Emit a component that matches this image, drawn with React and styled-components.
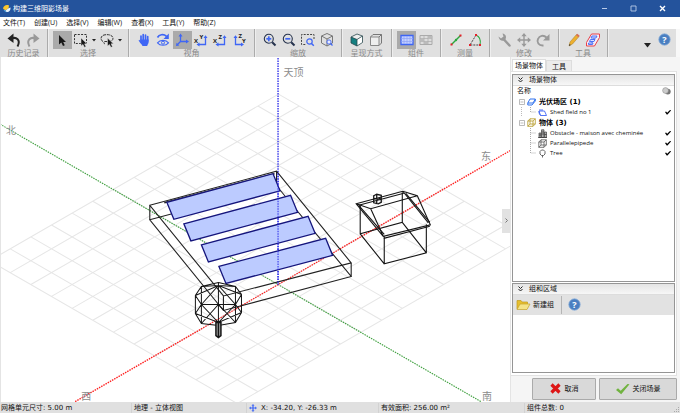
import React from "react";
import styled, { createGlobalStyle, css } from "styled-components";

const GlobalStyle = createGlobalStyle`
  * { box-sizing: border-box; }
  html, body { margin: 0; background: #f2f2f2; }
  body, button, input, table {
    font-family: "Open Sans", "Noto Sans CJK SC", sans-serif;
    font-size: 7px;
    line-height: 10px;
    color: #111;
  }
  button { padding: 0; border: 0; background: none; white-space: nowrap; }
  svg { display: block; flex: none; }
`;

const BLUE = "#3f66f5";

/* ---------- window frame ---------- */

const Window = styled.div`
  display: flex;
  flex-direction: column;
  min-height: 100vh;
  overflow: hidden;
  background: #f8f8f8;
`;

const TitleBar = styled.header`
  display: flex;
  align-items: center;
  height: 17px;
  padding: 0 4px 0 3px;
  gap: 2px;
  background: #24539c;
  color: #fff;
`;

const WindowTitle = styled.h1`
  flex: 1;
  margin: 0;
  font-size: 7px;
  font-weight: 400;
`;

const WindowControl = styled.button`
  display: flex;
  align-items: center;
  justify-content: center;
  width: 27px;
  height: 16px;
`;

const MenuBar = styled.nav`
  display: flex;
  align-items: center;
  gap: 9px;
  height: 12px;
  padding-left: 3px;
  background: #fff;
`;

const MenuItem = styled.button`
  font-size: 7px;
`;

/* ---------- toolbar ---------- */

const Toolbar = styled.div`
  display: flex;
  height: 28px;
  margin: 0 4px 0 0;
  background: #e0e0e0;
`;

const Group = styled.section`
  display: flex;
  flex-direction: column;
  align-items: center;
  width: ${(p) => p.$width}px;
  padding-top: 2px;
  border-right: 1px solid #ababab;
  box-shadow: 1px 0 0 #eee;
`;

const GroupLabel = styled.span`
  font-size: 8px;
  line-height: 7px;
  color: #8a8a8a;
`;

const Tools = styled.div`
  display: flex;
  align-items: center;
`;

const Tool = styled.button`
  display: flex;
  align-items: center;
  justify-content: center;
  width: 19px;
  height: 18px;
  background: ${(p) => (p.$active ? "#aaa" : "transparent")};
`;

const Drop = styled.button`
  display: flex;
  align-items: center;
  justify-content: center;
  width: 7px;
  height: 18px;
`;

const ToolbarEnd = styled.div`
  display: flex;
  flex: 1;
  align-items: center;
  justify-content: flex-end;
  gap: 4px;
  padding: 0 2px 8px 0;
`;

const MoreButton = styled(Drop)`
  align-items: flex-end;
`;

/* ---------- body ---------- */

const Body = styled.main`
  display: flex;
  flex: 1;
  min-height: 344px;
`;

const Viewport = styled.section`
  position: relative;
  display: flex;
  flex: 1;
  min-width: 0;
  background: #fff;
  border-left: 1px solid #e4e4e4;
  border-right: 1px solid #e4e4e4;
`;

const SceneSvg = styled.svg`
  flex: 1;
  width: 100%;
  height: auto;
  min-width: 0;
`;

const CollapseHandle = styled.button`
  position: absolute;
  right: 0;
  top: 44%;
  display: flex;
  align-items: center;
  justify-content: center;
  width: 8px;
  height: 24px;
  background: #e2e2e2;
`;

const Side = styled.aside`
  display: flex;
  flex-direction: column;
  width: 169px;
  padding: 2px 3px 2px 0;
  background: #f5f5f5;
`;

const Tabs = styled.div`
  display: flex;
  align-items: flex-end;
  padding-left: 1px;
`;

const Tab = styled.button`
  height: ${(p) => (p.$active ? 12 : 11)}px;
  padding: 0 ${(p) => (p.$active ? 2 : 5)}px;
  border: 1px solid #ddd;
  border-bottom: 0;
  line-height: 9px;
  background: ${(p) => (p.$active ? "#fff" : "#ececec")};
`;

const TabPage = styled.div`
  display: flex;
  flex: 1;
  flex-direction: column;
  gap: 1px;
  padding: 2px 1px;
  background: #fff;
  border: 1px solid #e2e2e2;
  border-left: 0;
`;

const Panel = styled.section`
  display: flex;
  flex-direction: column;
  flex: ${(p) => p.$grow};
  border: 1px solid #959595;
  background: #fff;
`;

const PanelHeader = styled.button`
  display: flex;
  align-items: center;
  gap: 6px;
  height: 11px;
  padding-left: 5px;
  background: linear-gradient(#e4e4e4, #f7f7f7);
  border-bottom: 1px solid #ddd;
`;

const ObjectTable = styled.table`
  width: 100%;
  border-collapse: collapse;
  th, td { padding: 0; }
  thead th { height: 10px; font-weight: 400; text-align: left; }
`;

const NameHeader = styled.th`
  && { padding-left: 4px; }
`;

const Row = styled.tr`
  td { height: ${(p) => (p.$parent ? 11 : 10)}px; }
`;

const NodeCell = styled.div`
  display: flex;
  align-items: center;
  height: ${(p) => (p.$parent ? 11 : 10)}px;
  padding-left: 5px;
  font-size: 6px;
  white-space: nowrap;
  ${(p) => p.$parent && css`
    font-family: "DejaVu Sans", "Noto Sans CJK SC", sans-serif;
    font-size: 7px;
    font-weight: 700;
    color: #000;
  `}
`;

const NodeLabel = styled.label`
  margin-left: 3px;
`;

const Toggle = styled.button`
  display: flex;
  align-items: center;
  width: 9px;
  height: 11px;
`;

const Narrow = styled.td`
  width: 12px;
`;

const Shown = styled.input`
  display: block;
  appearance: none;
  width: 6px;
  height: 5px;
  margin: 0 0 0 3px;
  background: #000;
  clip-path: ${(p) => (p.checked ? "polygon(0 50%, 18% 42%, 36% 66%, 88% 5%, 100% 18%, 42% 100%, 28% 100%)" : "none")};
`;

const GroupTools = styled.div`
  display: flex;
  align-items: center;
  height: 20px;
  padding-left: 3px;
  background: #e2e2e2;
`;

const NewGroup = styled.button`
  display: flex;
  align-items: center;
  gap: 2px;
  height: 18px;
  padding-right: 7px;
  margin-right: 6px;
  border-right: 1px solid #b5b5b5;
`;

const Actions = styled.div`
  display: flex;
  justify-content: flex-end;
  gap: 3px;
  padding-top: 2px;
`;

const ActionButton = styled.button`
  display: flex;
  align-items: center;
  justify-content: center;
  gap: ${(p) => (p.$wide ? 3 : 4)}px;
  width: ${(p) => (p.$wide ? 78 : 64)}px;
  height: 22px;
  background: #d9d9d9;
  border: 1px solid #aaa;
  border-radius: 1px;
`;

/* ---------- status bar ---------- */

const StatusBar = styled.footer`
  display: grid;
  grid-template-columns: 131fr 115fr 132fr 146fr 156fr;
  align-items: center;
  height: 12px;
  background: #e0e0e0;
  font-family: "DejaVu Sans", "Noto Sans CJK SC", sans-serif;
  white-space: nowrap;
`;

const StatusItem = styled.span`
  display: flex;
  align-items: center;
  gap: 4px;
  height: 10px;
  padding-left: ${(p) => (p.$first ? 1 : 2)}px;
  border-left: ${(p) => (p.$first ? "0" : "1px solid #d2d2d2")};
`;

const Grip = styled.span`
  margin-left: auto;
  align-self: flex-end;
`;

/* ---------- icons ---------- */

const Icon = ({ w = 16, h = 16, children }) => (
  <svg width={w} height={h} viewBox={`0 0 ${w} ${h}`} fill="none" aria-hidden="true">{children}</svg>
);

const LogoIcon = () => (
  <Icon w={8} h={10}>
    <path d="M0 4.500C.5 1.500 3.500.2 6 1.500L5.600 4.200 2.500 6.500Z" fill="#fbc52d" />
    <path d="M2.500 6.500 5.600 4.200 7.500 3.500C7.800 6 6 8.500 3.300 8Z" fill="#eaf3fb" />
    <path d="M.6 5.500 2.500 6.500 3.500 8.200C2 8 .8 7 .6 5.500Z" fill="#4ba0e0" />
  </Icon>
);

const UndoIcon = ({ color, flip }) => (
  <Icon>
    <g transform={flip ? "translate(16 0) scale(-1 1)" : undefined}>
      <path d="M5 6.500C10.500 4.500 15 8 11.500 14.500" stroke={color} strokeWidth="2" />
      <path d="M1.500 6.500 7.500 1.500V11Z" fill={color} />
    </g>
  </Icon>
);

const arrowPath = "M0 0V9.500L2.300 7.500 4 11 5.800 10.200 4.200 6.900H7Z";

const CursorIcon = () => (
  <Icon><path transform="translate(5 3)" d={arrowPath} fill="#181818" /></Icon>
);

const MarqueeIcon = () => (
  <Icon>
    <path d="M1.500 2.500H13.500V11.500H1.500Z" stroke="#333" strokeDasharray="2 1.300" />
    <path transform="translate(8 6) scale(.85)" d={arrowPath} fill="#181818" stroke="#e0e0e0" strokeWidth=".6" />
  </Icon>
);

const LassoIcon = () => (
  <Icon>
    <path d="M4 9.500C1 8 1.500 4 5 3 9 2 13.500 3 14 6 14.200 9 11 10 7 9.500 4.500 9.200 4 11 6 12" stroke="#333" strokeDasharray="3 .8" />
    <path transform="translate(8.500 6) scale(.85)" d={arrowPath} fill="#181818" stroke="#e0e0e0" strokeWidth=".6" />
  </Icon>
);

const CaretIcon = ({ w = 4 }) => (
  <Icon w={w} h={w === 4 ? 3 : 5}><path d={w === 4 ? "M0 0H4L2 2.500Z" : "M0 0H7L3.500 4.500Z"} fill="#222" /></Icon>
);

const HandIcon = () => (
  <Icon>
    <path d="M5 10V4M7.200 8.500V2.500M9.500 8.500V3M11.700 9V4.500" stroke={BLUE} strokeWidth="1.700" strokeLinecap="round" />
    <path d="M4.200 7.500 12.600 7.500V10.500C12.300 12 11.500 12.500 11.200 14H6.500C6 12.500 4 11 2.600 8.500L3.200 7.800 4.800 9.200Z" fill={BLUE} />
  </Icon>
);

const OrbitIcon = () => (
  <Icon>
    <path d="M2.500 5.500C4 2.500 8.500 1.500 11.500 4.300" stroke={BLUE} strokeWidth="1.700" />
    <path d="M13.800 1.500V7H8.500Z" fill={BLUE} />
    <path d="M2.500 10.800C5 7.500 11 7.500 13.500 10.800 11 14 5 14 2.500 10.800Z" stroke={BLUE} strokeWidth="1.100" />
    <circle cx="8" cy="10.700" r="1.500" stroke={BLUE} />
  </Icon>
);

const AxesIcon = () => (
  <Icon>
    <path d="M6.500 3.500V9.500H13M6.500 9.500 3.500 12.500" stroke={BLUE} strokeWidth="1.300" />
    <path d="M4.500 4.500 6.500 1.500 8.500 4.500ZM12 7.500 15 9.500 12 11.500ZM2 14 2.500 10.700 5.300 13.500Z" fill={BLUE} />
  </Icon>
);

const Letter = styled.text`
  font: 700 6px "Open Sans", sans-serif;
  fill: #222;
`;

const PlaneIcon = ({ a, b, swap }) => (
  <Icon>
    {swap ? (
      <>
        <path d="M4.500 4.500V12.500H11" stroke={BLUE} strokeWidth="1.300" />
        <path d="M2.500 6 4.500 3.200 6.500 6ZM10 10.500 13 12.500 10 14.500Z" fill={BLUE} />
        <Letter x="7.500" y="6">{a}</Letter>
        <Letter x="11" y="10.500">{b}</Letter>
      </>
    ) : (
      <>
        <path d="M12.500 5V12.500H5.500" stroke={BLUE} strokeWidth="1.300" />
        <path d="M10.500 6 12.500 3.200 14.500 6ZM6.500 10.500 3.500 12.500 6.500 14.500Z" fill={BLUE} />
        <Letter x="1" y="10.500">{a}</Letter>
        <Letter x="6.500" y="6.500">{b}</Letter>
      </>
    )}
  </Icon>
);

const ZoomIcon = ({ plus }) => (
  <Icon>
    <circle cx="6.800" cy="6.800" r="4.500" stroke="#26334d" strokeWidth="1.100" />
    <path d="M4.300 6.800H9.300" stroke={BLUE} strokeWidth="1.700" />
    {plus && <path d="M6.800 4.300V9.300" stroke={BLUE} strokeWidth="1.700" />}
    <path d="M10.200 10.200 13.500 13.500" stroke="#26334d" strokeWidth="2" />
  </Icon>
);

const ZoomAreaIcon = () => (
  <Icon>
    <path d="M14 7V2.500H1.500V12.500H6" stroke="#444" strokeDasharray="2 1.200" />
    <circle cx="9.500" cy="9.500" r="2.700" fill="#e0e0e0" stroke={BLUE} strokeWidth="1.200" />
    <path d="M11.500 11.500 13.800 13.800" stroke={BLUE} strokeWidth="1.500" />
  </Icon>
);

const ZoomCubeIcon = () => (
  <Icon>
    <path d="M8 1.500 13.500 4V11L8 14 2.500 11V4ZM2.500 4 8 7 13.500 4M8 7V14" stroke="#777" />
    <circle cx="10" cy="10" r="2.100" fill="#e8eaff" stroke={BLUE} strokeWidth=".9" />
    <path d="M11.500 11.500 13.500 13.500" stroke={BLUE} strokeWidth="1.200" />
  </Icon>
);

const ShadedCubeIcon = () => (
  <Icon>
    <path d="M2 5 8 2 13.500 4 8 7.500Z" fill="#eee" />
    <path d="M2 5 8 7.500V14L2 11Z" fill="#157f80" />
    <path d="M8 7.500 13.500 4V10.500L8 14Z" fill="#fff" />
    <path d="M8 2 2 5V11L8 14 13.500 10.500V4ZM2 5 8 7.500 13.500 4M8 7.500V14" stroke="#28484c" strokeWidth=".8" />
  </Icon>
);

const WireCubeIcon = () => (
  <Icon>
    <path d="M2.500 5H11V13.500H2.500Z" fill="#eee" stroke="#888" />
    <path d="M2.500 5 5 2.500H13.500V11L11 13.500M11 5 13.500 2.500" stroke="#777" />
  </Icon>
);

const GridIcon = ({ active }) => (
  <Icon>
    <path d="M2 3.500H14V12.500H2Z" fill={active ? "#c5d0ff" : "#ddd"} stroke={active ? BLUE : "#aaa"} strokeWidth={active ? 1.3 : 1} />
    <path d={active ? "M5 4V12M8 4V12M11 4V12M2 6.500H14M2 9.500H14" : "M6 4V12M10 4V12M2 6.500H14M2 9.500H14"} stroke={active ? "#8da3f8" : "#aaa"} strokeWidth=".7" />
    {!active && <path d="M10 4H14V6.500H10ZM2 7H6V9.500H2ZM6 10H10V12H6Z" fill="#bbb" />}
  </Icon>
);

const MeasureIcon = () => (
  <Icon>
    <path d="M3.500 12.500 12.500 3.500" stroke="#2ba83e" strokeWidth="1.400" />
    <path d="M2.500 11.500h2v2h-2zM11.500 2.500h2v2h-2z" fill="#e5202a" />
    <circle cx="8" cy="8" r="1.200" fill="#2ba83e" />
  </Icon>
);

const AngleIcon = () => (
  <Icon>
    <path d="M9 3 3 13H13" stroke="#444" strokeDasharray="2 1" />
    <path d="M9 3C12.500 4.500 14 8.500 13 13" stroke="#2ba83e" strokeWidth="1.200" />
    <path d="M8 2h2v2H8zM2 12h2v2H2zM12 12h2v2h-2z" fill="#e5202a" />
  </Icon>
);

const WrenchIcon = () => (
  <Icon>
    <path d="M6.500 7 12.500 13.500" stroke="#999" strokeWidth="2.500" strokeLinecap="round" />
    <path d="M5.500 1.500C9 2 10 5.500 8 8 5.500 9.500 2 8.500 1.500 4.500L4 6.500 6.500 4.500Z" fill="#999" />
  </Icon>
);

const MoveIcon = ({ color = "#999", small }) => (
  <svg width={small ? 8 : 14} height={small ? 8 : 14} viewBox="1.500 1.500 13 13" fill="none" aria-hidden="true">
    <path d="M8 4V12M4 8H12" stroke={color} strokeWidth={small ? 2 : 1.300} />
    <path d="M5.500 4.500 8 1.500 10.500 4.500ZM5.500 11.500 8 14.500 10.500 11.500ZM4.500 5.500 1.500 8 4.500 10.500ZM11.500 5.500 14.500 8 11.500 10.500Z" fill={color} />
  </svg>
);

const RotateIcon = () => (
  <Icon>
    <path d="M8.500 13.500C3.500 14 1.500 10 3 7 4.500 3.500 8.500 2.500 11.500 5.500" stroke="#999" strokeWidth="1.900" />
    <path d="M14.500 2V8.500H8Z" fill="#999" />
  </Icon>
);

const PencilIcon = () => (
  <Icon>
    <path d="M3 14 4 10 10.500 2.500 13 4.500 6.500 12Z" fill="#edb02f" stroke="#a27a28" strokeWidth=".5" />
    <path d="M10 3.200 11.300 1.800 13.700 3.800 12.500 5.200Z" fill="#d77059" />
    <path d="M3 14 3.500 12 4.800 13Z" fill="#333" />
  </Icon>
);

const FieldIcon = () => (
  <Icon>
    <path d="M1.500 10.500 6.500 2H14.500V5.500L9.500 14H1.500Z" fill="#f3eef6" stroke="#e8404a" />
    <path d="M7 4H12L11 6H6ZM5.500 7.500H10L9 9.500H4.500ZM3.500 11H8L7.500 12.500H3.500ZM9 6V7.500M7 9.500V11" stroke={BLUE} strokeWidth=".9" fill="#dbe1ff" />
  </Icon>
);

const Question = styled.text`
  font: 700 9px "Open Sans", sans-serif;
  fill: #fff;
`;

const HelpIcon = () => (
  <Icon w={13} h={13}>
    <circle cx="6.500" cy="6.500" r="5.700" fill="#4a7fc1" stroke="#8aaed9" strokeWidth=".8" />
    <Question x="6.500" y="9.800" textAnchor="middle">?</Question>
  </Icon>
);

const ChevronsIcon = () => (
  <Icon w={5} h={6}><path d="M.5.5 2.500 2.500 4.500.5M.5 3 2.500 5 4.500 3" stroke="#222" /></Icon>
);

const SphereIcon = () => (
  <Icon w={9} h={8}>
    <circle cx="5.800" cy="4.600" r="2.900" fill="#777" />
    <circle cx="3.500" cy="3.500" r="2.900" fill="#ccc" stroke="#888" strokeWidth=".5" />
  </Icon>
);

const MinusBox = () => (
  <Icon w={7} h={11}><path d="M1.500 3.500H6.500V8.500H1.500ZM2.500 6H5.500" stroke="#aaa" strokeWidth=".8" /></Icon>
);

const Guide = ({ last, outer }) => (
  <Icon w={20} h={10}>
    {outer && <path d="M3.500 0V10" stroke="#bbb" strokeDasharray="1 1" />}
    <path d={last ? "M12.500 0V5H18" : "M12.500 0V10M12.500 5H18"} stroke="#aaa" strokeDasharray="1 1" />
  </Icon>
);

const SmallField = ({ flat }) => (
  <Icon w={9} h={9}>
    {flat
      ? <path d="M1 3H6.500L8.500 7.500H2.500ZM1 3V5L2.500 7.500M1 2H5" stroke={BLUE} strokeWidth=".9" />
      : <path d="M.8 6 3 2H8.300L6 6ZM.8 6V8H5L8.300 4V2" stroke="#3272ed" strokeWidth="1" />}
  </Icon>
);

const SmallCube = ({ color = "#b59a27" }) => (
  <Icon w={9} h={9}>
    <path d="M.8 3H6V8.300H.8ZM.8 3 3 .8H8.300V6L6 8.300M6 3 8.300.8M3 .8V6M3 6H8.300M.8 8.300 3 6" stroke={color} strokeWidth=".8" />
  </Icon>
);

const BuildingIcon = () => (
  <Icon w={9} h={9}>
    <path d="M1 4H3V8.500H1ZM3.500.8H6V8.500H3.500ZM6.500 3H8.500V8.500H6.500Z" fill="#aaa" stroke="#444" strokeWidth=".7" />
    <path d="M0 8.500H9M3.500 3H6M3.500 5H6M1 6H3M6.500 5.500H8.500" stroke="#333" strokeWidth=".7" />
  </Icon>
);

const TreeIcon = () => (
  <Icon w={9} h={9}>
    <path d="M3.500 1H5.500L7 2.500V5L5.500 6.500H3.500L2 5V2.500ZM4.500 6.500V8.500" stroke="#555" strokeWidth=".9" />
  </Icon>
);

const FolderIcon = () => (
  <Icon w={15} h={13}>
    <path d="M1 11V2.500H5L6 4H11.500V6" fill="#e6bf2e" stroke="#bf9a1c" strokeWidth=".7" />
    <path d="M1 11.500 4 6H14L11 11.500Z" fill="#f4e388" stroke="#c5a228" strokeWidth=".7" />
  </Icon>
);

const CrossIcon = () => (
  <Icon w={11} h={11}><path d="M1.500 1.500 9.500 9.500M9.500 1.500 1.500 9.500" stroke="#dd1616" strokeWidth="3.200" /></Icon>
);

const TickIcon = () => (
  <Icon w={14} h={12}><path d="M0 7 2 5.300 4.700 7.800 11.500 1 13.500 1.300 5.200 11.300Z" fill="#71b340" /></Icon>
);

/* ---------- 3D scene ---------- */

const AxisName = styled.text`
  font: 400 10px "Noto Sans CJK SC", sans-serif;
  fill: #8c8c8c;
`;

const CELL_X = 20.6;
const CELL_Y = 11.88;
const APEX = { x: 278, y: 94 };

const gridPoint = (right, left) =>
  `${APEX.x + (right - left) * CELL_X} ${APEX.y + (right + left) * CELL_Y}`;

const gridPath = [
  ...Array.from({ length: 13 }, (_, i) => `M${gridPoint(i, 0)}L${gridPoint(i, 14)}`),
  ...Array.from({ length: 15 }, (_, i) => `M${gridPoint(0, i)}L${gridPoint(12, i)}`),
].join("");

const panels = [
  "166.500,202 272.500,173.500 279.500,190.500 173.500,219",
  "183.500,223.500 290,195 297,212 190.500,240.500",
  "201,244.500 307.500,216 314.500,233 208,261.500",
  "218.500,266 325,238 332,255 225.500,283",
];

const Scene = () => (
  <SceneSvg viewBox="1 57 508 344" preserveAspectRatio="xMidYMid slice" fill="none" role="img" aria-label="3D">
    <path d={gridPath} stroke="#e6e6e6" />
    <g strokeDasharray="1.500 1">
      <path d="M0 124 480 401" stroke="#3fa03f" strokeWidth="1.100" />
      <path d="M75 401 510 150" stroke="#ff2020" strokeWidth="1.300" />
      <path d="M277.500 58V284" stroke="#2525e8" strokeWidth="1.300" />
    </g>
    <g stroke="#222" strokeWidth="1.100">
      <path d="M149.500 205 276 171 350.500 262.500 223 295.500ZM149.500 219.500 276 185.500 350.500 276 223 310ZM149.500 205V219.500M276 171V185.500M350.500 262.500V276M223 295.500V310" />
      <path d="M164 202.500 274 173.500" strokeWidth="1.500" />
    </g>
    {panels.map((points) => (
      <polygon key={points} points={points} fill="#bccbff" stroke="#15157c" strokeWidth="1.300" />
    ))}
    <path d="M277.500 173V284" stroke="#2525e8" strokeDasharray="1.500 1" />
    <g stroke="#151515">
      <path d="M218 282 235 286 241 294V312L235 322 218 325 201 323 195 313V295L201 286ZM201 286 218 285 235 286M195 295 201 304 195 313M241 294 235 304 241 312M201 286V323M235 286V322M218 282V324M201 304 218 285 235 304 218 322ZM195 295 218 285 241 294M201 304H235M201 323 218 304 235 322M195 313 218 322 241 312" />
      <path d="M215.500 322H220.500V335L218 337 215.500 335ZM218 322V336" fill="#aaa" strokeWidth="1.500" />
    </g>
    <g stroke="#151515" strokeWidth="1.100">
      <path d="M355.500 203.500 402 191 416.500 195.500 429.500 224.500 382.500 236ZM355.500 203.500 370 208.500 416.500 195.500M370 208.500 382.500 236" />
      <path d="M358 205 403 193M358 205 383.500 234M402 191 427.500 222.500M405 193 429 222M383 238 429 226" />
      <path d="M359.500 205V233.500L401.500 222V192M383.500 236V263.500L425.500 252.500V224M359.500 233.500 383.500 263.500M401.500 222 425.500 252.500" />
      <path d="M373 195.500 376 194 380.500 195V202L377.500 203.500 373 202.500ZM373 198 377 199 380.500 197.500M376 194V203" strokeWidth="1.300" />
    </g>
    <AxisName x="283" y="76">天顶</AxisName>
    <AxisName x="480" y="160">东</AxisName>
    <AxisName x="6" y="134">北</AxisName>
    <AxisName x="81" y="399">西</AxisName>
    <AxisName x="481" y="399">南</AxisName>
  </SceneSvg>
);

/* ---------- data ---------- */

const menus = ["文件(T)", "创建(U)", "选择(V)", "编辑(W)", "查看(X)", "工具(Y)", "帮助(Z)"];

const toolGroups = [
  { label: "历史记录", width: 48, tools: [{ name: "撤消", icon: <UndoIcon color="#222" /> }, { name: "重做", icon: <UndoIcon color="#999" flip /> }] },
  { label: "选择", width: 81, tools: [
    { name: "指针", icon: <CursorIcon />, active: true },
    { name: "框选", icon: <MarqueeIcon />, drop: true },
    { name: "套索", icon: <LassoIcon />, drop: true },
  ] },
  { label: "视角", width: 126, tools: [
    { name: "平移", icon: <HandIcon /> },
    { name: "旋转视图", icon: <OrbitIcon /> },
    { name: "立体视图", icon: <AxesIcon />, active: true },
    { name: "XY", icon: <PlaneIcon a="X" b="Y" /> },
    { name: "XZ", icon: <PlaneIcon a="X" b="Z" /> },
    { name: "ZY", icon: <PlaneIcon a="Z" b="Y" swap /> },
  ] },
  { label: "缩放", width: 87, tools: [
    { name: "放大", icon: <ZoomIcon plus /> },
    { name: "缩小", icon: <ZoomIcon /> },
    { name: "区域缩放", icon: <ZoomAreaIcon /> },
    { name: "全部显示", icon: <ZoomCubeIcon /> },
  ] },
  { label: "呈现方式", width: 50, tools: [{ name: "实体", icon: <ShadedCubeIcon /> }, { name: "线框", icon: <WireCubeIcon /> }] },
  { label: "组件", width: 49, tools: [{ name: "显示组件", icon: <GridIcon active />, active: true }, { name: "分组组件", icon: <GridIcon /> }] },
  { label: "测量", width: 49, tools: [{ name: "距离", icon: <MeasureIcon /> }, { name: "角度", icon: <AngleIcon /> }] },
  { label: "修改", width: 69, tools: [
    { name: "设置", icon: <WrenchIcon /> },
    { name: "移动", icon: <MoveIcon /> },
    { name: "旋转", icon: <RotateIcon /> },
  ] },
  { label: "工具", width: 49, tools: [{ name: "编辑", icon: <PencilIcon /> }, { name: "分区", icon: <FieldIcon /> }] },
];

const objects = [
  { label: "光伏场区 (1)", icon: <SmallField />, parent: true },
  { label: "Shed field no 1", icon: <SmallField flat />, outer: true, last: true },
  { label: "物体 (3)", icon: <SmallCube />, parent: true },
  { label: "Obstacle - maison avec cheminée", icon: <BuildingIcon /> },
  { label: "Parallelepipede", icon: <SmallCube color="#555" /> },
  { label: "Tree", icon: <TreeIcon />, last: true },
];

export default function App() {
  return (
    <Window>
      <GlobalStyle />
      <TitleBar>
        <LogoIcon />
        <WindowTitle>构建三维阴影场景</WindowTitle>
        <WindowControl aria-label="最小化"><Icon w={7} h={7}><path d="M1 3.500H6" stroke="#b9cbe8" /></Icon></WindowControl>
        <WindowControl aria-label="最大化"><Icon w={7} h={7}><path d="M1 1H6V6H1Z" stroke="#b9cbe8" strokeWidth=".9" /></Icon></WindowControl>
        <WindowControl aria-label="关闭"><Icon w={7} h={7}><path d="M1 1 6 6M6 1 1 6" stroke="#fff" strokeWidth="1.400" /></Icon></WindowControl>
      </TitleBar>
      <MenuBar>{menus.map((m) => <MenuItem key={m}>{m}</MenuItem>)}</MenuBar>
      <Toolbar>
        {toolGroups.map((g) => (
          <Group key={g.label} $width={g.width}>
            <Tools>
              {g.tools.map((t) => (
                <React.Fragment key={t.name}>
                  <Tool aria-label={t.name} $active={t.active}>{t.icon}</Tool>
                  {t.drop && <Drop aria-label={`${t.name}选项`}><CaretIcon /></Drop>}
                </React.Fragment>
              ))}
            </Tools>
            <GroupLabel>{g.label}</GroupLabel>
          </Group>
        ))}
        <ToolbarEnd>
          <MoreButton aria-label="更多"><CaretIcon w={7} /></MoreButton>
          <Tool aria-label="帮助"><HelpIcon /></Tool>
        </ToolbarEnd>
      </Toolbar>
      <Body>
        <Viewport>
          <Scene />
          <CollapseHandle aria-label="折叠面板"><Icon w={3} h={5}><path d="M.5.5 2.500 2.500.5 4.500" stroke="#777" /></Icon></CollapseHandle>
        </Viewport>
        <Side>
          <Tabs role="tablist">
            <Tab role="tab" aria-selected="true" $active>场景物体</Tab>
            <Tab role="tab" aria-selected="false">工具</Tab>
          </Tabs>
          <TabPage>
            <Panel $grow="208 1 0">
              <PanelHeader><ChevronsIcon />场景物体</PanelHeader>
              <ObjectTable>
                <thead><tr><NameHeader>名称</NameHeader><Narrow as="th" aria-label="显示"><SphereIcon /></Narrow></tr></thead>
                <tbody>
                  {objects.map((o, i) => (
                    <Row key={o.label} $parent={o.parent}>
                      <td>
                        <NodeCell $parent={o.parent}>
                          {o.parent ? <Toggle aria-label={`折叠 ${o.label}`}><MinusBox /></Toggle> : <Guide last={o.last} outer={o.outer} />}
                          {o.icon}
                          <NodeLabel htmlFor={o.parent ? undefined : `object-${i}`}>{o.label}</NodeLabel>
                        </NodeCell>
                      </td>
                      <Narrow>{!o.parent && <Shown type="checkbox" id={`object-${i}`} checked readOnly />}</Narrow>
                    </Row>
                  ))}
                </tbody>
              </ObjectTable>
            </Panel>
            <Panel $grow="89 1 0">
              <PanelHeader><ChevronsIcon />组和区域</PanelHeader>
              <GroupTools>
                <NewGroup><FolderIcon />新建组</NewGroup>
                <button aria-label="帮助"><HelpIcon /></button>
              </GroupTools>
            </Panel>
          </TabPage>
          <Actions>
            <ActionButton><CrossIcon />取消</ActionButton>
            <ActionButton $wide><TickIcon />关闭场景</ActionButton>
          </Actions>
        </Side>
      </Body>
      <StatusBar>
        <StatusItem $first>网格单元尺寸: 5.00 m</StatusItem>
        <StatusItem>地理 - 立体视图</StatusItem>
        <StatusItem><MoveIcon color={BLUE} small />X: -34.20, Y: -26.33 m</StatusItem>
        <StatusItem>有效面积: 256.00 m²</StatusItem>
        <StatusItem>组件总数: 0
          <Grip><Icon w={7} h={7}><path d="M5 1h1v1H5zM3 3h1v1H3zM5 3h1v1H5zM1 5h1v1H1zM3 5h1v1H3zM5 5h1v1H5z" fill="#aaa" /></Icon></Grip>
        </StatusItem>
      </StatusBar>
    </Window>
  );
}
